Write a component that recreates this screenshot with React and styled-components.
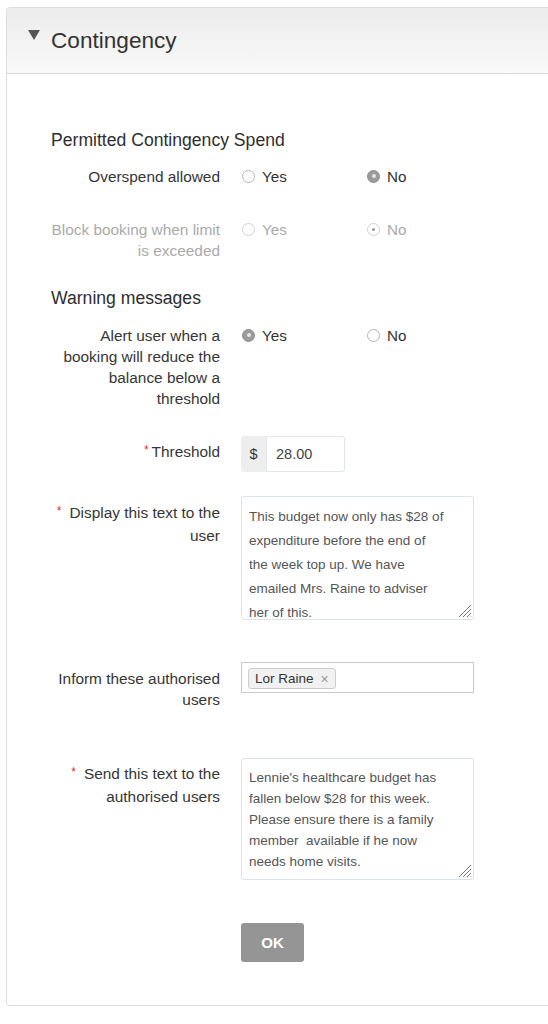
import React from "react";
import styled, { createGlobalStyle } from "styled-components";

const GlobalStyle = createGlobalStyle`
  html, body { margin: 0; padding: 0; background: #fff; overflow: hidden; }
  body { font-family: "Liberation Sans", Arial, sans-serif; color: #333; }
  * { box-sizing: border-box; }
`;

const Page = styled.div`
  padding: 7px 0 0 6px;
`;

const Panel = styled.section`
  width: 560px;
  border: 1px solid #dddddd;
  border-radius: 4px;
  background: #fff;
  overflow: hidden;
`;

const Header = styled.header`
  height: 66px;
  display: flex;
  align-items: center;
  gap: 11px;
  padding-left: 21px;
  background: linear-gradient(#ececec, #f9f9f9);
  border-bottom: 1px solid #dadada;
`;

const Caret = styled.span`
  width: 0;
  height: 0;
  border-left: 6.5px solid transparent;
  border-right: 6.5px solid transparent;
  border-top: 10px solid #555;
  margin-top: -11px;
`;

const Title = styled.h2`
  margin: 0;
  font-size: 22.6px;
  font-weight: normal;
  color: #333;
`;

const Body = styled.div`
  padding: 54px 0 43px 44px;
`;

const SectionTitle = styled.h3`
  margin: ${(p) => p.$mt || 0}px 0 0;
  font-size: 17.6px;
  line-height: 24px;
  font-weight: normal;
  color: #2e2e2e;
`;

const Row = styled.div`
  display: grid;
  grid-template-columns: 169px 233px;
  column-gap: 21px;
  align-items: start;
  margin-top: ${(p) => p.$mt}px;
`;

const Label = styled.label`
  text-align: right;
  font-size: 15.4px;
  line-height: 21px;
  padding-top: ${(p) => p.$pt || 0}px;
  color: ${(p) => (p.$disabled ? "#aaaaaa" : "#363636")};
`;

const Asterisk = styled.span`
  color: #e0302b;
  font-size: 12px;
  position: relative;
  top: -3px;
  margin-right: ${(p) => p.$gap}px;
`;

const RadioGroup = styled.div`
  display: flex;
`;

const Option = styled.span`
  flex: none;
  width: 125px;
  display: flex;
  align-items: center;
  gap: 7px;
  height: 21px;
  font-size: 15.2px;
  padding-left: 1px;
  color: ${(p) => (p.$disabled ? "#aaaaaa" : "#333")};
`;

const Radio = styled.span`
  width: 13px;
  height: 13px;
  border-radius: 50%;
  flex: none;
  display: flex;
  align-items: center;
  justify-content: center;
  border: 1px solid ${(p) => (p.$on && !p.$disabled ? "#8d8d8d" : p.$disabled ? "#d2d2d2" : "#b5b5b5")};
  background: ${(p) => (p.$on && !p.$disabled ? "#9b9b9b" : "#fff")};
  &::after {
    content: "";
    display: ${(p) => (p.$on ? "block" : "none")};
    width: ${(p) => (p.$disabled ? 3 : 4)}px;
    height: ${(p) => (p.$disabled ? 3 : 4)}px;
    border-radius: 50%;
    background: ${(p) => (p.$disabled ? "#9a9a9a" : "#e6e6e6")};
  }
`;

const InputGroup = styled.div`
  display: flex;
  width: 104px;
  height: 36px;
`;

const Addon = styled.span`
  width: 25px;
  display: flex;
  align-items: center;
  justify-content: center;
  background: #eeeeee;
  border-radius: 3px 0 0 3px;
  font-size: 14.5px;
  color: #333;
`;

const Input = styled.input`
  flex: 1;
  min-width: 0;
  border: 1px solid #e1e6ec;
  border-radius: 0 3px 3px 0;
  padding: 0 0 0 9px;
  font-family: "Liberation Sans", Arial, sans-serif;
  font-size: 14.5px;
  color: #444;
  outline: none;
`;

const AreaWrap = styled.div`
  position: relative;
  width: 233px;
`;

const TextArea = styled.textarea`
  display: block;
  width: 233px;
  height: ${(p) => p.$h}px;
  border: 1px solid #dde3ea;
  border-radius: 3px;
  padding: ${(p) => p.$pt}px 6px 0 7px;
  font-family: "Liberation Sans", Arial, sans-serif;
  font-size: 13.5px;
  line-height: ${(p) => p.$lh}px;
  color: #555;
  resize: none;
  overflow: hidden;
  white-space: pre;
  outline: none;
`;

const Grip = styled.svg`
  position: absolute;
  right: 2px;
  bottom: 2px;
`;

const TagBox = styled.div`
  width: 233px;
  height: 31px;
  border: 1px solid #c9c9c9;
  padding: 5px 6px 0;
`;

const Tag = styled.span`
  display: inline-flex;
  align-items: center;
  gap: 7px;
  height: 21px;
  padding: 0 6px;
  border: 1px solid #cdcdcd;
  border-radius: 3px;
  background: #f1f1f1;
  font-size: 13.5px;
  color: #333;
`;

const Remove = styled.span`
  color: #9a9a9a;
  font-size: 14px;
  line-height: 1;
`;

const Button = styled.button`
  width: 63px;
  height: 39px;
  border: none;
  border-radius: 3px;
  background: #959595;
  color: #fff;
  font-family: "Liberation Sans", Arial, sans-serif;
  font-weight: bold;
  font-size: 15px;
`;

const ResizeGrip = () => (
  <Grip width="15" height="15" viewBox="0 0 15 15" fill="none" stroke="#777" strokeWidth="1">
    <path d="M14 2 L2 14 M14 6 L6 14 M14 10 L10 14 M14 13.5 L13.5 14" />
  </Grip>
);

const RadioPair = ({ value, disabled }) => (
  <RadioGroup>
    <Option $disabled={disabled}>
      <Radio $on={value === "yes"} $disabled={disabled} />
      Yes
    </Option>
    <Option $disabled={disabled}>
      <Radio $on={value === "no"} $disabled={disabled} />
      No
    </Option>
  </RadioGroup>
);

const displayText =
  "This budget now only has $28 of\nexpenditure before the end of\nthe week top up. We have\nemailed Mrs. Raine to adviser\nher of this.";
const sendText =
  "Lennie's healthcare budget has\nfallen below $28 for this week.\nPlease ensure there is a family\nmember  available if he now\nneeds home visits.";

export default function App() {
  return (
    <>
      <GlobalStyle />
      <Page>
        <Panel>
          <Header>
            <Caret />
            <Title>Contingency</Title>
          </Header>
          <Body>
            <SectionTitle>Permitted Contingency Spend</SectionTitle>
            <Row $mt={13.5}>
              <Label>Overspend allowed</Label>
              <RadioPair value="no" />
            </Row>
            <Row $mt={32}>
              <Label $disabled>Block booking when limit is exceeded</Label>
              <RadioPair value="no" disabled />
            </Row>

            <SectionTitle $mt={25.5}>Warning messages</SectionTitle>
            <Row $mt={14.5}>
              <Label>Alert user when a booking will reduce the balance below a threshold</Label>
              <RadioPair value="yes" />
            </Row>
            <Row $mt={27.5}>
              <Label $pt={4.5}>
                <Asterisk $gap={3}>*</Asterisk>Threshold
              </Label>
              <InputGroup>
                <Addon>$</Addon>
                <Input defaultValue="28.00" />
              </InputGroup>
            </Row>
            <Row $mt={24}>
              <Label $pt={5.5}>
                <Asterisk $gap={8}>*</Asterisk>Display this text to the user
              </Label>
              <AreaWrap>
                <TextArea $h={124} $pt={8} $lh={24} defaultValue={displayText} />
                <ResizeGrip />
              </AreaWrap>
            </Row>
            <Row $mt={42}>
              <Label $pt={5.5}>Inform these authorised users</Label>
              <TagBox>
                <Tag>
                  Lor Raine <Remove>×</Remove>
                </Tag>
              </TagBox>
            </Row>
            <Row $mt={48.5}>
              <Label $pt={4.5}>
                <Asterisk $gap={8}>*</Asterisk>Send this text to the authorised users
              </Label>
              <AreaWrap>
                <TextArea $h={122} $pt={8} $lh={21} defaultValue={sendText} />
                <ResizeGrip />
              </AreaWrap>
            </Row>
            <Row $mt={43}>
              <span />
              <div>
                <Button>OK</Button>
              </div>
            </Row>
          </Body>
        </Panel>
      </Page>
    </>
  );
}
